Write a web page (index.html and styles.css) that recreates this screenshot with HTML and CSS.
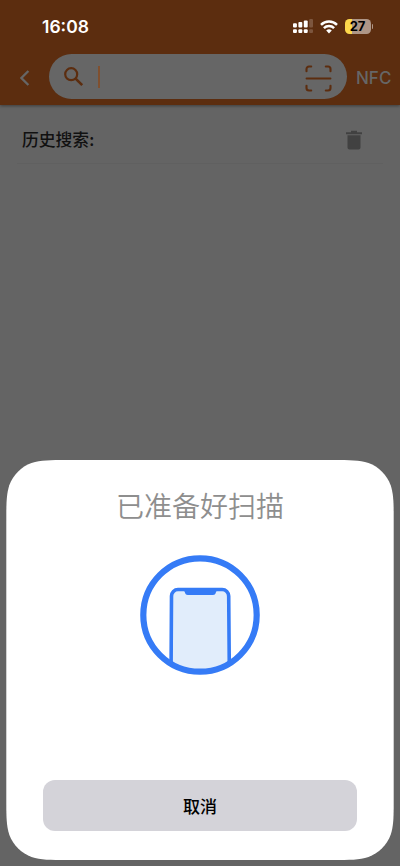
FILE: index.html
```html
<!DOCTYPE html>
<html lang="zh-CN">
<head>
    <meta charset="UTF-8">
    <meta name="viewport" content="width=device-width, initial-scale=1.0">
    <title>历史搜索</title>
    <link rel="stylesheet" href="styles.css">
</head>
<body>
    <div class="header">
        <div class="statusbar">
            <span class="time">16:08</span>
            <div class="indicators">
                <svg class="signal" width="20" height="15" viewBox="0 0 20 15">
                    <g fill="#fff">
                        <rect x="0" y="4.3" width="3.9" height="4.2" rx="1"/>
                        <rect x="5.4" y="3.1" width="3.9" height="5.4" rx="1"/>
                        <rect x="10.8" y="1.6" width="3.9" height="6.9" rx="1"/>
                        <rect x="0" y="10.3" width="3.9" height="3.6" rx="1"/>
                        <rect x="5.4" y="10.3" width="3.9" height="3.6" rx="1"/>
                        <rect x="10.8" y="10.3" width="3.9" height="3.6" rx="1"/>
                    </g>
                    <g fill="#7d563e">
                        <rect x="16.2" y="0" width="3.8" height="8.5" rx="1"/>
                        <rect x="16.2" y="10.3" width="3.8" height="3.6" rx="1"/>
                    </g>
                </svg>
                <svg class="wifi" width="18" height="14" viewBox="0 0 18 14">
                    <g fill="none" stroke="#fff" stroke-width="2.5">
                        <path d="M1 4.9a11.4 11.4 0 0 1 16 0"/>
                        <path d="M3.9 8.1a7.3 7.3 0 0 1 10.2 0"/>
                    </g>
                    <path d="M9 13.4 6.2 10.6a4 4 0 0 1 5.6 0z" fill="#fff"/>
                </svg>
                <div class="battery">27</div>
                <div class="battery-tip"></div>
            </div>
        </div>
        <div class="navbar">
            <svg class="back" width="10" height="16" viewBox="0 0 10 16">
                <path d="M8.4 1 1.4 8l7 7" fill="none" stroke="#666" stroke-width="2.4"/>
            </svg>
            <div class="search">
                <svg class="glass" width="20" height="20" viewBox="0 0 20 20">
                    <circle cx="7.2" cy="7.2" r="6" fill="none" stroke="#5c2d0f" stroke-width="2.2"/>
                    <path d="m11.6 11.6 6.6 6.6" stroke="#5c2d0f" stroke-width="2.6"/>
                </svg>
                <div class="caret"></div>
                <svg class="scan" width="27" height="27" viewBox="0 0 27 27">
                    <g fill="none" stroke="#5c2d0f" stroke-width="2.1" stroke-linecap="round">
                        <path d="M1.5 6.2V4a2.5 2.5 0 0 1 2.5-2.5h2.2"/>
                        <path d="M20.8 1.5H23A2.5 2.5 0 0 1 25.5 4v2.2"/>
                        <path d="M25.5 20.8V23a2.5 2.5 0 0 1-2.5 2.5h-2.2"/>
                        <path d="M6.2 25.5H4A2.5 2.5 0 0 1 1.5 23v-2.2"/>
                        <path d="M1.6 13.5h23.8"/>
                    </g>
                </svg>
            </div>
            <span class="nfc">NFC</span>
        </div>
    </div>
    <div class="history">
        <span class="history-title">历史搜索:</span>
        <svg class="trash" width="16" height="20" viewBox="0 0 16 20">
            <path d="M0 2.2h5V.8h6v1.4h5v2H0zM1.5 5.3h13v12.2a2 2 0 0 1-2 2h-9a2 2 0 0 1-2-2z" fill="#414141"/>
        </svg>
    </div>
    <div class="sheet">
        <div class="sheet-title">已准备好扫描</div>
        <svg class="phone" width="120" height="120" viewBox="0 0 120 120">
            <clipPath id="ring">
                <circle cx="60" cy="60" r="57"/>
            </clipPath>
            <g clip-path="url(#ring)">
                <path d="M31 125 31.5 41a6.5 6.5 0 0 1 6.5-6.5h44.2a6.5 6.5 0 0 1 6.5 6.5l.7 84z" fill="#e1edfb" stroke="#357bf6" stroke-width="3.6"/>
                <path d="M43.2 34h34.4v1.7c-1.6.3-1.4 1-1.8 2-.5 1.5-1.3 2.2-2.8 2.2H47.8c-1.5 0-2.3-.7-2.8-2.2-.4-1-.2-1.7-1.8-2z" fill="#357bf6"/>
            </g>
            <circle cx="60" cy="60" r="56.7" fill="none" stroke="#357bf6" stroke-width="6.2"/>
        </svg>
        <button class="cancel">取消</button>
    </div>
</body>
</html>
```

FILE: styles.css
```css
* {
    box-sizing: border-box;
}
body {
    position: relative;
    height: 866px;
    margin: 0;
    overflow: hidden;
    background: #646464;
    font-family: Inter, "Noto Sans CJK SC", sans-serif;
}
svg {
    display: block;
    flex: none;
}
.header {
    height: 105px;
    background: #5c2d0f;
    box-shadow: 0 1px 3px rgba(0, 0, 0, 0.4);
}
.statusbar {
    display: flex;
    justify-content: space-between;
    align-items: center;
    height: 53px;
    padding: 0 27px 0 42px;
}
.time {
    color: #fff;
    font-size: 17.5px;
    font-weight: 600;
}
.indicators {
    display: flex;
    align-items: center;
}
.wifi {
    margin: 0 7px 0 7px;
}
.battery {
    width: 26px;
    height: 15px;
    border-radius: 4.5px;
    background: linear-gradient(to right, #fdd84b 7px, #ae9687 7px);
    color: #000;
    font-size: 13px;
    font-weight: 700;
    line-height: 15px;
    text-align: center;
}
.battery-tip {
    width: 1.5px;
    height: 5px;
    margin-left: 1px;
    border-radius: 0 2px 2px 0;
    background: #ae9687;
}
.navbar {
    display: flex;
    align-items: center;
    height: 48px;
    padding-left: 20px;
}
.back {
    margin-top: 2px;
}
.search {
    display: flex;
    align-items: center;
    width: 298px;
    height: 45px;
    margin: 0 0 1px 19px;
    padding: 2px 15px 0;
    border-radius: 23px;
    background: #666;
}
.glass {
    margin-bottom: 1px;
}
.caret {
    width: 2px;
    height: 22px;
    margin: 0 0 1px 14px;
    background: #80502f;
}
.scan {
    margin: 1px 0 0 auto;
}
.nfc {
    margin-left: 9px;
    padding-top: 1px;
    color: #666;
    font-size: 17px;
    font-weight: 500;
}
.history {
    display: flex;
    justify-content: space-between;
    align-items: center;
    height: 59px;
    margin: 0 17px;
    padding: 9px 21px 0 5px;
    border-bottom: 1px solid #606060;
}
.history-title {
    height: 26px;
    color: #111;
    font-family: "Noto Sans CJK SC", sans-serif;
    font-size: 16.8px;
    font-weight: 500;
    line-height: 26px;
}
.trash {
    margin-top: 3px;
}
.sheet {
    position: absolute;
    top: 460px;
    left: 6.3px;
    display: flex;
    flex-direction: column;
    align-items: center;
    width: 387.4px;
    height: 400px;
    background: #fff;
    /* rounded corners with a continuous curve */
    clip-path: path("M61 0H326.4C343.9 0 352.7 0 362.2 3C372.5 6.8 380.6 14.9 384.4 25.2C387.4 34.7 387.4 43.5 387.4 61V339C387.4 356.5 387.4 365.3 384.4 374.8C380.6 385.1 372.5 393.2 362.2 397C352.7 400 343.9 400 326.4 400H61C43.5 400 34.7 400 25.2 397C14.9 393.2 6.8 385.1 3 374.8C0 365.3 0 356.5 0 339V61C0 43.5 0 34.7 3 25.2C6.8 14.9 14.9 6.8 25.2 3C34.7 0 43.5 0 61 0Z");
}
.sheet-title {
    height: 42px;
    margin-top: 24px;
    color: #8e8e8e;
    font-family: "Noto Sans CJK SC", sans-serif;
    font-size: 28px;
    font-weight: 350;
    line-height: 42px;
}
.phone {
    margin-top: 29px;
}
.cancel {
    width: 314px;
    height: 51px;
    margin-top: 105px;
    padding: 0 0 1px;
    border: 0;
    border-radius: 12px;
    background: #d4d3d9;
    color: #000;
    font-family: "Noto Sans CJK SC", sans-serif;
    font-size: 17px;
    font-weight: 500;
}
```
